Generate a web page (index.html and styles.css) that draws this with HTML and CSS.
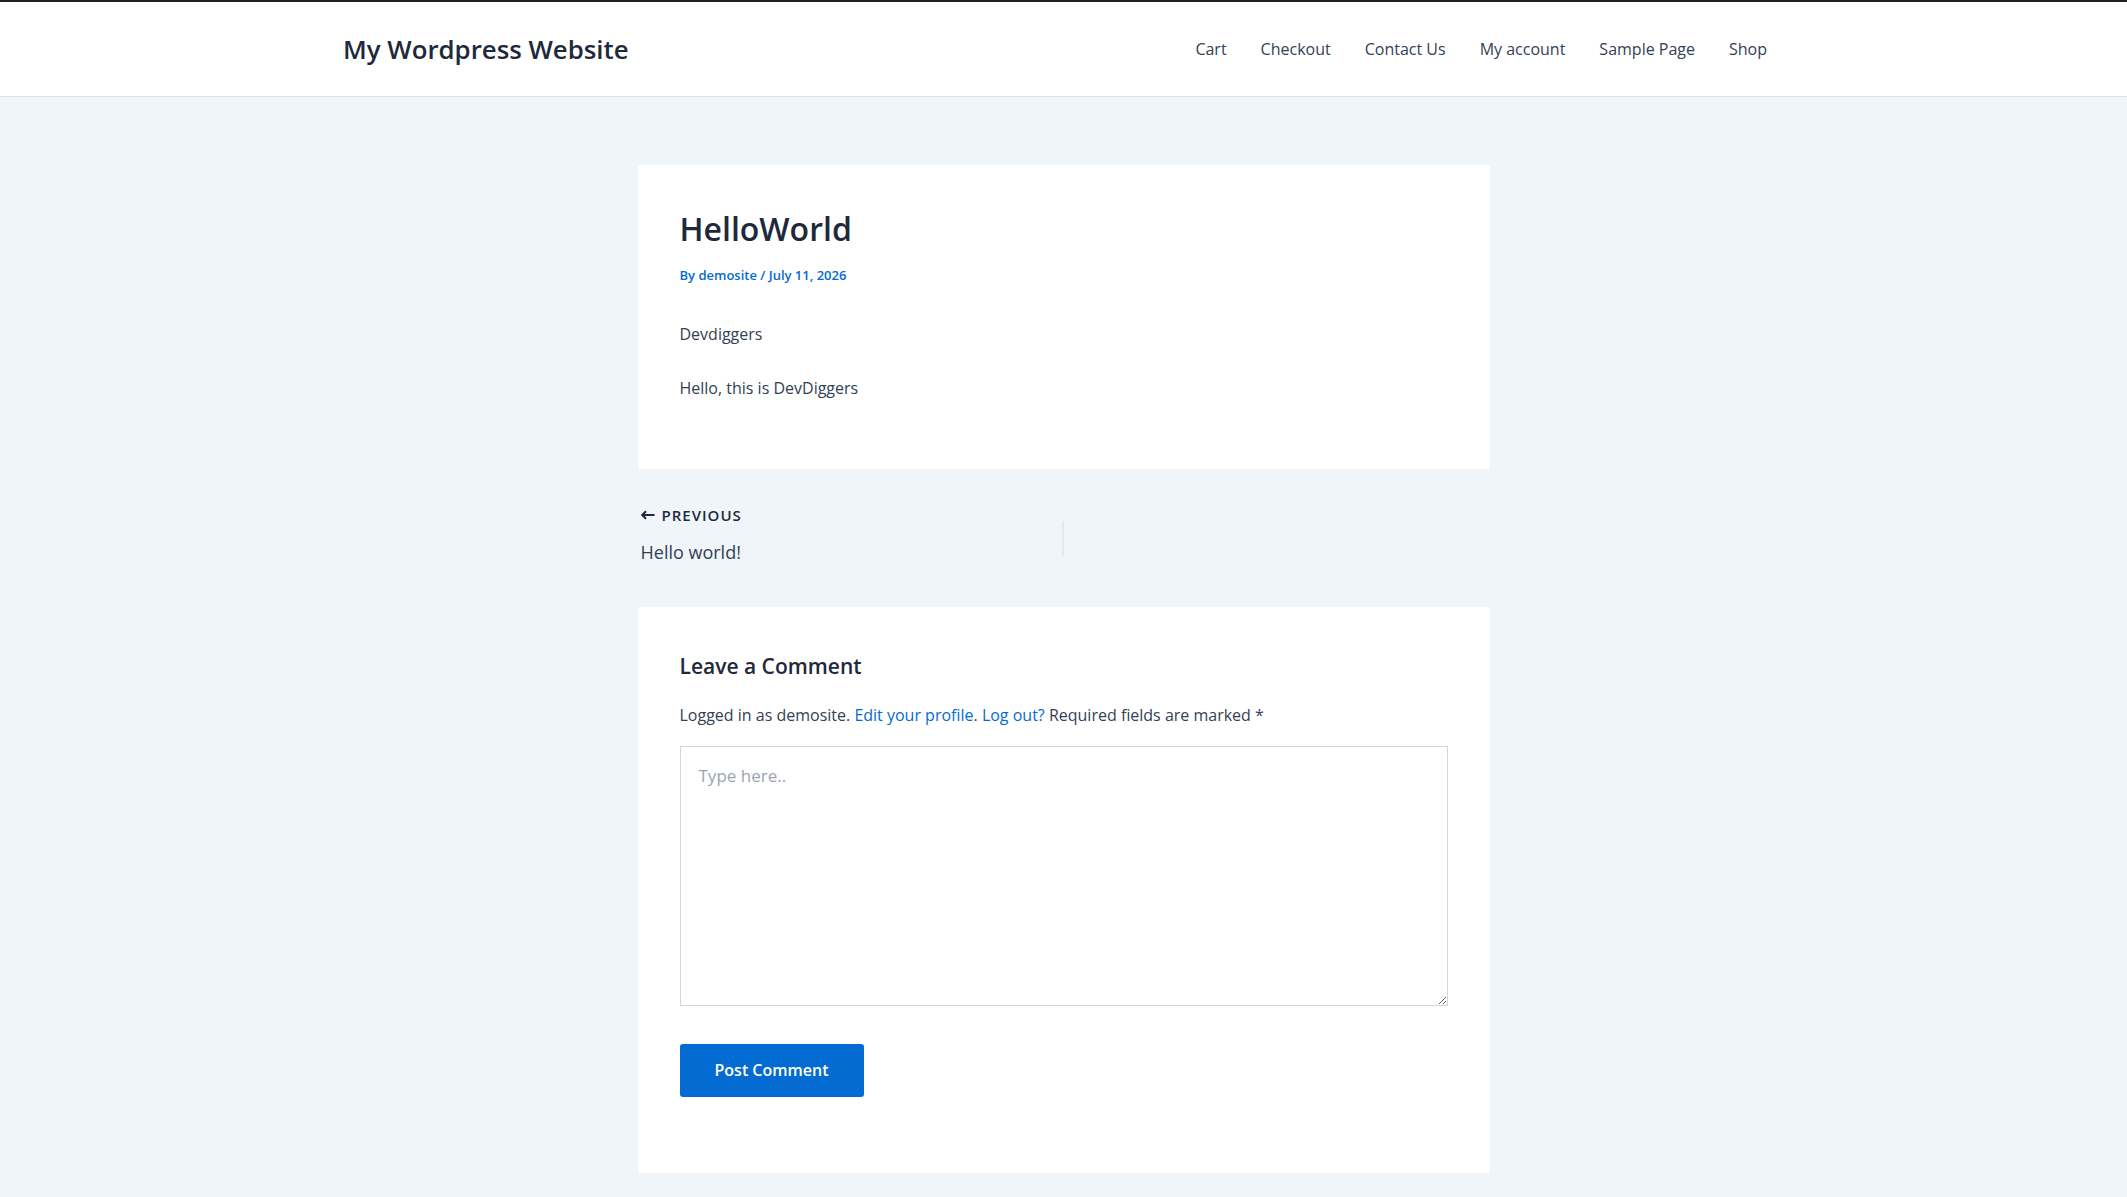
FILE: index.html
```html
<!DOCTYPE html>
<html lang="en">
<head>
<meta charset="utf-8">
<title>HelloWorld – My Wordpress Website</title>
<link rel="stylesheet" href="styles.css">
</head>
<body>
<header class="site-header">
  <div class="header-inner">
    <a class="site-title" href="#">My Wordpress Website</a>
    <nav class="main-nav">
      <ul class="menu">
        <li><a href="#">Cart</a></li>
        <li><a href="#">Checkout</a></li>
        <li><a href="#">Contact Us</a></li>
        <li><a href="#">My account</a></li>
        <li><a href="#">Sample Page</a></li>
        <li><a href="#">Shop</a></li>
      </ul>
    </nav>
  </div>
</header>

<main class="site-content">
  <div class="container">
    <article class="card post">
      <h1 class="entry-title">HelloWorld</h1>
      <div class="entry-meta">By <a href="#">demosite</a> / <span>July 11, 2026</span></div>
      <div class="entry-content">
        <p>Devdiggers</p>
        <p>Hello, this is DevDiggers</p>
      </div>
    </article>

    <nav class="post-nav">
      <a class="nav-prev" href="#">
        <span class="nav-label">
          <svg class="arrow" width="14" height="10" viewBox="0 0 14 10" aria-hidden="true">
            <path d="M1.5 5H13.5" stroke="#1e293b" stroke-width="2" fill="none"/>
            <path d="M5 1.2L1.2 5L5 8.8" stroke="#1e293b" stroke-width="2" fill="none" stroke-linejoin="miter"/>
          </svg>
          PREVIOUS
        </span>
        <span class="nav-post-title">Hello world!</span>
      </a>
      <span class="nav-divider"></span>
      <div class="nav-next"></div>
    </nav>

    <section class="card comments">
      <h3 class="comment-title">Leave a Comment</h3>
      <p class="logged-in">Logged in as demosite. <a href="#">Edit your profile</a>. <a href="#">Log out?</a> Required fields are marked <span class="required">*</span></p>
      <form class="comment-form" onsubmit="return false;">
        <textarea class="comment-field" placeholder="Type here.."></textarea>
        <button class="submit" type="submit">Post Comment</button>
      </form>
    </section>
  </div>
</main>
</body>
</html>
```

FILE: styles.css
```css
* {
  box-sizing: border-box;
}

html, body {
  margin: 0;
  padding: 0;
}

body {
  background: #f0f5fa;
  font-family: "Open Sans", "Noto Sans", "Liberation Sans", sans-serif;
  color: #334155;
  font-size: 16px;
  min-height: 1197px;
}

a {
  text-decoration: none;
  color: #046bd2;
}

/* Header */
.site-header {
  background: #ffffff;
  border-top: 2px solid #202020;
  border-bottom: 1px solid #dcdfe3;
}

.header-inner {
  width: 1441px;
  margin: 0 auto;
  height: 94px;
  display: flex;
  align-items: center;
  justify-content: space-between;
}

.site-title {
  margin-top: 1px;
  font-size: 25.8px;
  font-weight: 600;
  color: #1e293b;
  line-height: 1.2;
}

.menu {
  list-style: none;
  margin: 0;
  padding: 0;
  display: flex;
}

.menu a {
  display: block;
  padding: 0 17px;
  font-size: 16px;
  line-height: 24px;
  color: #334155;
}

/* Content */
.site-content {
  padding-top: 68px;
}

.container {
  width: 852px;
  margin: 0 auto;
}

.card {
  background: #ffffff;
  border-radius: 2px;
}

.post {
  padding: 45px 42px 39px;
}

.entry-title {
  margin: 0;
  font-size: 32px;
  line-height: 38.4px;
  font-weight: 600;
  color: #1e293b;
}

.entry-meta {
  margin-top: 18px;
  font-size: 13px;
  line-height: 19.5px;
  font-weight: 600;
  color: #046bd2;
}

.entry-content {
  margin-top: 35px;
}

.entry-content p {
  margin: 0 0 28px;
  font-size: 16px;
  line-height: 26.4px;
  color: #334155;
}

/* Post navigation */
.post-nav {
  display: flex;
  align-items: flex-start;
  padding: 35px 0 41.5px;
}

.nav-prev {
  width: 424px;
  flex: none;
  padding-left: 3px;
  display: flex;
  flex-direction: column;
}

.nav-label {
  display: flex;
  align-items: center;
  gap: 7px;
  font-size: 15px;
  line-height: 22.5px;
  font-weight: 600;
  letter-spacing: 1px;
  color: #1e293b;
}

.arrow {
  display: block;
  flex: none;
}

.nav-post-title {
  margin-top: 12.5px;
  font-size: 18px;
  line-height: 27px;
  color: #334155;
}

.nav-divider {
  flex: none;
  width: 2px;
  height: 35px;
  margin-top: 17px;
  background: #e2e8f0;
}

.nav-next {
  flex: 1;
}

/* Comments */
.comments {
  padding: 46.5px 42px 76px;
}

.comment-title {
  margin: 0;
  font-size: 21px;
  line-height: 25.2px;
  font-weight: 600;
  color: #1e293b;
}

.logged-in {
  margin: 22.6px 0 0;
  font-size: 16px;
  line-height: 26.4px;
  color: #334155;
}

.comment-form {
  margin: 0;
}

.comment-field {
  display: block;
  width: 768px;
  height: 260px;
  margin-top: 18px;
  padding: 16px 18px 14px;
  border: 1px solid #d1d5db;
  border-radius: 0;
  background: #ffffff;
  font-family: "Open Sans", "Noto Sans", "Liberation Sans", sans-serif;
  font-size: 17px;
  line-height: 1.5;
  color: #334155;
  resize: vertical;
  outline: none;
}

.comment-field::placeholder {
  color: #9ca3af;
}

.submit {
  display: block;
  margin-top: 38px;
  width: 184px;
  height: 53px;
  border: none;
  border-radius: 3px;
  background: #046bd2;
  color: #ffffff;
  font-family: "Open Sans", "Noto Sans", "Liberation Sans", sans-serif;
  font-size: 16px;
  font-weight: 600;
  cursor: pointer;
}
```
